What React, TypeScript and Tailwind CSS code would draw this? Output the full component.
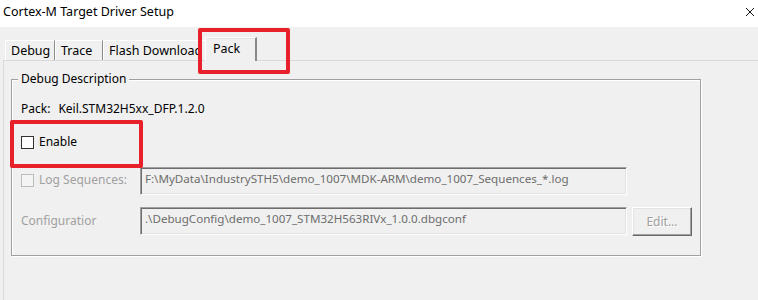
import React from "react";

const font = { fontFamily: '"Noto Sans", "Liberation Sans", sans-serif' };

function Tab({ label, w, selected, clip }: { label: string; w: number; selected?: boolean; clip?: boolean }) {
  if (selected) {
    return (
      <div
        className="relative z-10 -ml-[2px] h-[24px] -mb-[1px] bg-[#f0f0f0] border-t border-l border-white border-r-2 border-r-[#8a8a8a] shadow-[inset_0_1px_0_#e3e3e3] flex items-start pl-[7px] pt-[1px] text-[12.5px] leading-[20px] text-black"
        style={{ width: w }}
      >
        {label}
      </div>
    );
  }
  return (
    <div
      className={`h-[20px] bg-[#f0f0f0] border-t border-l border-white border-r border-r-[#8a8a8a] flex items-center pl-[5px] text-[12.5px] leading-[18px] text-black whitespace-nowrap ${clip ? "overflow-hidden" : ""}`}
      style={{ width: w }}
    >
      {label}
    </div>
  );
}

export default function App() {
  return (
    <div className="relative w-[758px] h-[300px] overflow-hidden bg-[#f0f0f0]" style={font}>
      {/* title bar */}
      <div className="h-[27px] bg-white flex items-center justify-between pl-[3px] pr-[2px]">
        <span className="text-[12.5px] text-black leading-[18px] -mt-[3px]">Cortex-M Target Driver Setup</span>
        <svg width="12" height="12" viewBox="0 0 12 12" className="-mt-[3px]">
          <path d="M2 2 L10 10 M10 2 L2 10" stroke="#111" strokeWidth="1" />
        </svg>
      </div>

      {/* tabs */}
      <div className="pl-[3px] pt-[10px]">
        <div className="flex items-end h-[23px] pl-[2px]">
          <Tab label="Debug" w={50} />
          <Tab label="Trace" w={48} />
          <Tab label="Flash Download" w={104} clip />
          <Tab label="Pack" w={52} selected />
        </div>
        {/* tab panel */}
        <div className="h-[240px] border-t border-l border-[#d9d9d9] pl-[7px] pt-[18px]">
          {/* group box */}
          <div className="relative w-[690px] border border-[#a0a0a0] shadow-[1px_1px_0_#ffffff,inset_1px_1px_0_#ffffff] pt-[20px] pb-[19px]">
            <span className="absolute -top-[10px] left-[6px] px-[3px] bg-[#f0f0f0] text-[12px] leading-[18px] text-black">
              Debug Description
            </span>

            <div className="h-[18px] pl-[9px] flex items-center text-[12px] text-black">
              <span>Pack:</span>
              <span className="ml-[8px]">Keil.STM32H5xx_DFP.1.2.0</span>
            </div>

            <div className="mt-[15px] h-[18px] pl-[9px] flex items-center text-[12px] text-black">
              <span className="w-[13px] h-[13px] border border-[#333] bg-white" />
              <span className="ml-[5px]">Enable</span>
            </div>

            <div className="mt-[16px] h-[28px] pl-[9px] flex items-center">
              <div className="w-[119px] flex items-center -mt-[2px]">
                <span className="w-[13px] h-[13px] border border-[#bcbcbc] bg-[#f4f4f4]" />
                <span className="ml-[5px] text-[12px] text-[#a0a0a0]">Log Sequences:</span>
              </div>
              <div className="w-[487px] h-[28px] border border-t-[#a0a0a0] border-l-[#a0a0a0] border-b-white border-r-white shadow-[inset_1px_1px_0_#6d6d6d,inset_-1px_-1px_0_#e3e3e3] bg-[#f0f0f0] pl-[4px] pt-[1px] text-[11.6px] leading-[20px] text-[#6d6d6d] whitespace-nowrap overflow-hidden">
                F:\MyData\IndustrySTH5\demo_1007\MDK-ARM\demo_1007_Sequences_*.log
              </div>
            </div>

            <div className="mt-[12px] h-[29px] pl-[9px] flex items-start">
              <div className="w-[119px] h-[28px] flex items-center text-[12px] text-[#a0a0a0]">Configuratior</div>
              <div className="w-[487px] h-[28px] border border-t-[#a0a0a0] border-l-[#a0a0a0] border-b-white border-r-white shadow-[inset_1px_1px_0_#6d6d6d,inset_-1px_-1px_0_#e3e3e3] bg-[#f0f0f0] pl-[4px] pt-[1px] text-[11.6px] leading-[20px] text-[#6d6d6d] whitespace-nowrap overflow-hidden">
                .\DebugConfig\demo_1007_STM32H563RIVx_1.0.0.dbgconf
              </div>
              <div className="ml-[5px] w-[60px] h-[29px] border border-t-white border-l-white border-b-[#696969] border-r-[#696969] shadow-[inset_-1px_-1px_0_#a0a0a0,inset_1px_1px_0_#e3e3e3] flex items-center justify-center text-[12px] text-[#a0a0a0] [text-shadow:1px_1px_0_#ffffff]">
                Edit...
              </div>
            </div>
          </div>
        </div>
      </div>

      {/* red highlight boxes */}
      <div className="absolute left-[198px] top-[28px] w-[92px] h-[46px] border-4 border-[#e8202a] rounded-[2px] pointer-events-none" />
      <div className="absolute left-[10px] top-[120px] w-[133px] h-[48px] border-4 border-[#e8202a] rounded-[2px] pointer-events-none" />
    </div>
  );
}
